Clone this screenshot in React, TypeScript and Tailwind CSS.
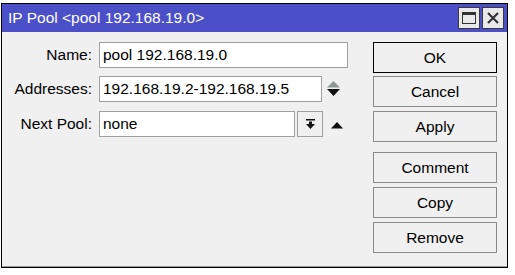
import React from 'react';

const font = "font-['Liberation_Sans',Arial,sans-serif]";

function Btn({ label, primary }: { label: string; primary?: boolean }) {
  return (
    <div
      className={
        'h-[31px] w-[124px] flex items-center justify-center bg-[#f0f0f0] text-[15.5px] text-black border ' +
        (primary ? 'border-black' : 'border-[#8a8a8a]')
      }
    >
      {label}
    </div>
  );
}

function Label({ text }: { text: string }) {
  return <div className="w-[91px] text-right pr-[1px] text-[15.5px] text-black">{text}</div>;
}

export default function App() {
  return (
    <div className={`w-[515px] h-[275px] bg-white overflow-hidden ${font}`}>
      {/* rows of the list behind the window, only their bottoms show */}
      <div className="h-[3px] overflow-hidden">
        <div className="-mt-[14px] flex text-[15px] leading-[18px] text-[#111] whitespace-nowrap">
          <span className="ml-[4px] w-[146px]">192.168.19.0</span>
          <span className="w-[295px]">192.168.19.2-192.168.19.1</span>
          <span>none</span>
        </div>
      </div>

      <div className="ml-[1px] w-[507px] border border-black">
        {/* title bar */}
        <div className="h-[28px] bg-[#4b50c8] flex items-center justify-between pl-[6px] pr-[3px]">
          <span className="text-white text-[15.5px] leading-none">IP Pool &lt;pool 192.168.19.0&gt;</span>
          <div className="flex gap-[2px]">
            <div className="w-[22px] h-[22px] bg-[#e9e9e9] border border-[#3a3a3a] flex items-center justify-center">
              <div className="w-[14px] h-[12px] border border-[#333] border-t-[3px]" />
            </div>
            <div className="w-[22px] h-[22px] bg-[#e9e9e9] border border-[#3a3a3a] flex items-center justify-center">
              <svg width="12" height="12" viewBox="0 0 12 12">
                <path d="M1 1L11 11M11 1L1 11" stroke="#333" strokeWidth="2.2" />
              </svg>
            </div>
          </div>
        </div>

        {/* body */}
        <div className="h-[235px] bg-[#f0f0f0] border-b border-[#9a9a9a] flex pt-[10px]">
          <div className="w-[371px] flex flex-col">
            <div className="flex items-center h-[26px] gap-[6px]">
              <Label text="Name:" />
              <div className="w-[249px] h-[26px] bg-white border border-[#a0a0a0] flex items-center pl-[3px] text-[15.5px] text-black">
                pool 192.168.19.0
              </div>
            </div>

            <div className="flex items-center h-[26px] gap-[6px] mt-[8px]">
              <Label text="Addresses:" />
              <div className="w-[223px] h-[26px] bg-white border border-[#a0a0a0] flex items-center pl-[3px] text-[15.5px] text-black">
                192.168.19.2-192.168.19.5
              </div>
              <svg width="13" height="16" viewBox="0 0 13 16" className="ml-[-1px]">
                <path d="M6.5 0L13 6.5H0Z" fill="#8e9696" />
                <path d="M0 8H13L6.5 15Z" fill="#111" />
              </svg>
            </div>

            <div className="flex items-center h-[26px] gap-[6px] mt-[9px]">
              <Label text="Next Pool:" />
              <div className="w-[196px] h-[26px] bg-white border border-[#a0a0a0] flex items-center pl-[3px] text-[15.5px] text-black">
                none
              </div>
              <div className="-ml-[4px] w-[26px] h-[26px] bg-[#f0f0f0] border border-[#a0a0a0] flex items-center justify-center">
                <svg width="9" height="10" viewBox="0 0 9 10">
                  <rect x="0" y="0" width="9" height="1.5" fill="#111" />
                  <rect x="3" y="2.5" width="3" height="3" fill="#111" />
                  <path d="M0 5H9L4.5 10Z" fill="#111" />
                </svg>
              </div>
              <svg width="12" height="7" viewBox="0 0 12 7" className="ml-[2px] mt-[2px]">
                <path d="M6 0L12 6.5H0Z" fill="#111" />
              </svg>
            </div>
          </div>

          <div className="flex flex-col">
            <Btn label="OK" primary />
            <div className="mt-[3px]">
              <Btn label="Cancel" />
            </div>
            <div className="mt-[4px]">
              <Btn label="Apply" />
            </div>
            <div className="mt-[10px]">
              <Btn label="Comment" />
            </div>
            <div className="mt-[4px]">
              <Btn label="Copy" />
            </div>
            <div className="mt-[4px]">
              <Btn label="Remove" />
            </div>
          </div>
        </div>
      </div>
    </div>
  );
}
